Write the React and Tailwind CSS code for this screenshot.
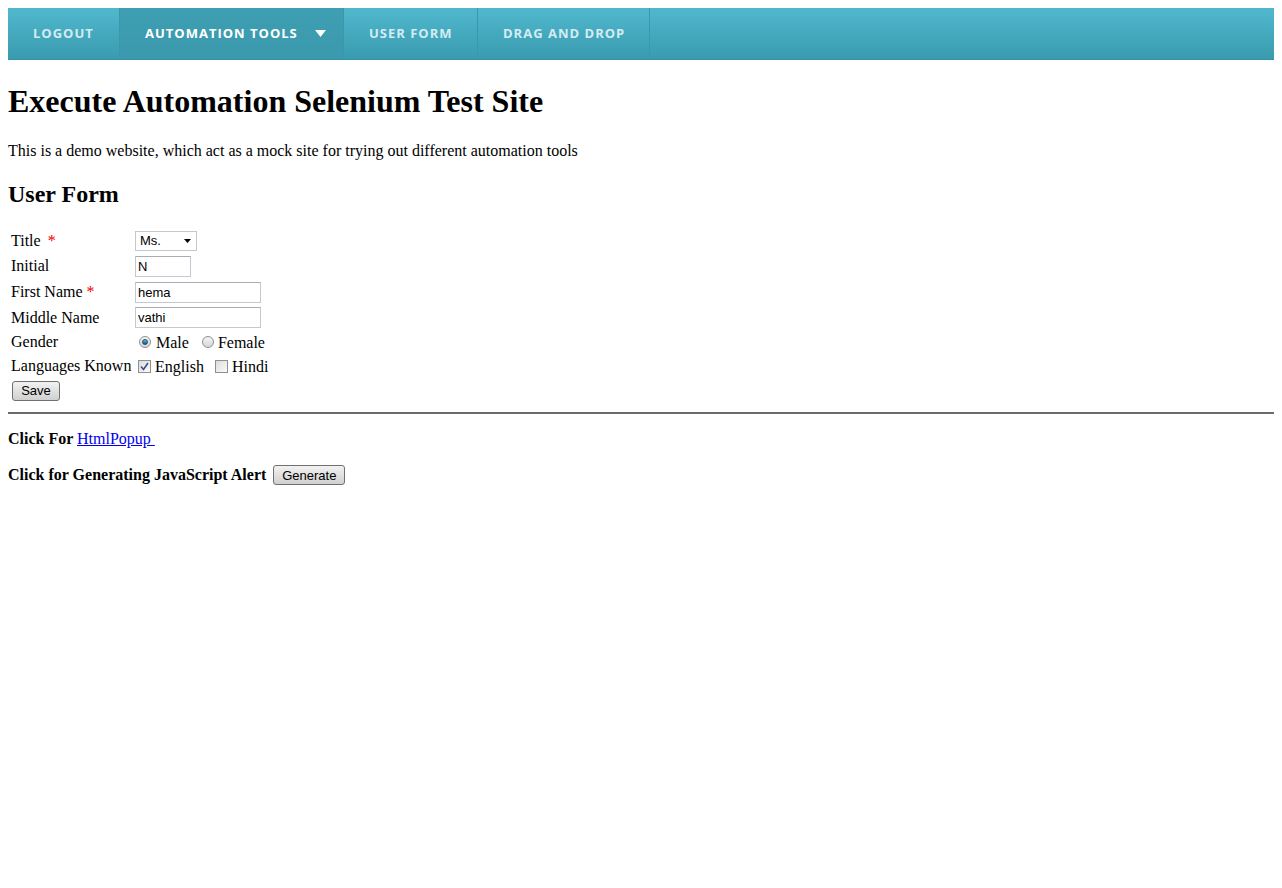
import { useState } from 'react';

const navItems = [
  { label: 'Logout', width: 'w-[112px]' },
  { label: 'Automation Tools', width: 'w-[224px]', active: true, caret: true },
  { label: 'User Form', width: 'w-[134px]' },
  { label: 'Drag and Drop', width: 'w-[172px]' },
];

function Radio({ checked }) {
  return (
    <span className="inline-flex items-center justify-center w-[12px] h-[12px] rounded-full border border-[#8e8f8f] bg-gradient-to-b from-[#f4f4f4] to-[#d6d6d6] align-middle -mt-[3px]">
      {checked && <span className="w-[6px] h-[6px] rounded-full bg-gradient-to-b from-[#5cc0e8] to-[#0b5b8a] border border-[#1b4f70]" />}
    </span>
  );
}

function Check({ checked }) {
  return (
    <span className="inline-flex items-center justify-center w-[13px] h-[13px] border border-[#8e8f8f] bg-gradient-to-br from-[#dcdcdc] to-[#fbfbfb] align-middle -mt-[3px]">
      {checked && (
        <svg width="9" height="9" viewBox="0 0 9 9">
          <path d="M1 4.5 L3.5 7.5 L8 1" fill="none" stroke="#3a4f8e" strokeWidth="1.6" />
        </svg>
      )}
    </span>
  );
}

export default function App() {
  const [title, setTitle] = useState('Ms.');
  const [initial, setInitial] = useState('N');
  const [first, setFirst] = useState('hema');
  const [middle, setMiddle] = useState('vathi');

  const inputCls = 'block h-[21px] border border-[#c5c8cf] border-t-[#a9acb3] px-[2px] text-[13px] text-black bg-white outline-none';
  const sans = { fontFamily: '"Liberation Sans", Arial, sans-serif' };

  return (
    <div className="m-2 text-black" style={{ fontFamily: '"Liberation Serif", "Times New Roman", serif' }}>
      {/* top menu */}
      <div
        className="flex h-[52px] bg-gradient-to-b from-[#50b8cd] to-[#3a9bb0] border-b border-[#3590a4]"
        style={{ fontFamily: '"Open Sans", sans-serif' }}
      >
        {navItems.map(item => (
          <div
            key={item.label}
            className={`${item.width} flex items-center pl-[25px] border-r border-[#3a98ad] text-[13px] font-bold uppercase tracking-[1px] ${item.active ? 'bg-[#3b98ab]/80 text-white' : 'text-[#d3ecf2]'}`}
          >
            <span>{item.label}</span>
            {item.caret && (
              <svg className="ml-[17px]" width="11" height="7" viewBox="0 0 11 7">
                <path d="M0 0 H11 L5.5 7 Z" fill="#ffffff" />
              </svg>
            )}
          </div>
        ))}
      </div>

      <h1 className="text-[32px] font-bold leading-[37px] mt-[23px] mb-[22px]">Execute Automation Selenium Test Site</h1>
      <p className="text-[16px] leading-[18px] my-4">This is a demo website, which act as a mock site for trying out different automation tools</p>
      <h2 className="text-[24px] font-bold leading-[28px] mt-[20px] mb-[21px]">User Form</h2>

      <table className="border-separate border-spacing-[2px] text-[16px] leading-[18px] -mt-[2px]">
        <tbody>
          <tr className="h-[23px]">
            <td className="w-[122px] p-0 pl-px whitespace-nowrap">Title <span className="text-[#e00] ml-[3px]">*</span></td>
            <td className="p-0 pl-px">
              <div className="relative w-[62px] h-[20px] border border-[#c5c8cf] bg-white text-[13px]" style={sans}>
                <select
                  value={title}
                  onChange={e => setTitle(e.target.value)}
                  className="appearance-none w-full h-full pl-[4px] bg-transparent outline-none"
                >
                  <option>Mr.</option>
                  <option>Ms.</option>
                </select>
                <svg className="absolute right-[5px] top-[7px] pointer-events-none" width="7" height="4" viewBox="0 0 7 4">
                  <path d="M0 0 H7 L3.5 4 Z" fill="#000" />
                </svg>
              </div>
            </td>
          </tr>
          <tr className="h-[24px]">
            <td className="p-0 pl-px">Initial</td>
            <td className="p-0 pl-px">
              <input value={initial} onChange={e => setInitial(e.target.value)} className={`${inputCls} w-[56px]`} style={sans} />
            </td>
          </tr>
          <tr className="h-[24px]">
            <td className="p-0 pl-px whitespace-nowrap">First Name <span className="text-[#e00]">*</span></td>
            <td className="p-0 pl-px">
              <input value={first} onChange={e => setFirst(e.target.value)} className={`${inputCls} w-[126px]`} style={sans} />
            </td>
          </tr>
          <tr className="h-[23px]">
            <td className="p-0 pl-px whitespace-nowrap">Middle Name</td>
            <td className="p-0 pl-px">
              <input value={middle} onChange={e => setMiddle(e.target.value)} className={`${inputCls} w-[126px]`} style={sans} />
            </td>
          </tr>
          <tr className="h-[21px]">
            <td className="p-0 pl-px">Gender</td>
            <td className="p-0 pl-[5px] pt-[2px] whitespace-nowrap">
              <Radio checked /> <span className="ml-[1px]">Male</span>
              <span className="ml-[13px]"><Radio /></span> <span>Female</span>
            </td>
          </tr>
          <tr className="h-[23px]">
            <td className="p-0 pl-px whitespace-nowrap">Languages Known</td>
            <td className="p-0 pl-[4px] pt-[2px] whitespace-nowrap">
              <Check checked /> <span>English</span>
              <span className="ml-[11px]"><Check /></span> <span>Hindi</span>
            </td>
          </tr>
          <tr className="h-[23px]">
            <td className="p-0 pl-px" colSpan={2}>
              <button
                className="block ml-[1px] w-[48px] h-[20px] border border-[#707070] rounded-[3px] bg-gradient-to-b from-[#f2f2f2] to-[#d0d0d0] text-[13px] leading-none"
                style={sans}
              >
                Save
              </button>
            </td>
          </tr>
        </tbody>
      </table>

      <hr className="mt-[8px] border-0 border-t-2 border-[#6b6b6b]" />

      <p className="mt-[16px] text-[16px] leading-[18px] font-bold">
        Click For <a href="#" className="font-normal text-[#0000ee] underline">HtmlPopup&nbsp;</a>
      </p>
      <p className="mt-[17px] text-[16px] leading-[18px] font-bold">
        Click for Generating JavaScript Alert{' '}
        <button
          className="ml-[3px] w-[72px] h-[20px] border border-[#707070] rounded-[3px] bg-gradient-to-b from-[#f2f2f2] to-[#d0d0d0] text-[13px] font-normal leading-none align-[0px]"
          style={sans}
        >
          Generate
        </button>
      </p>
    </div>
  );
}
